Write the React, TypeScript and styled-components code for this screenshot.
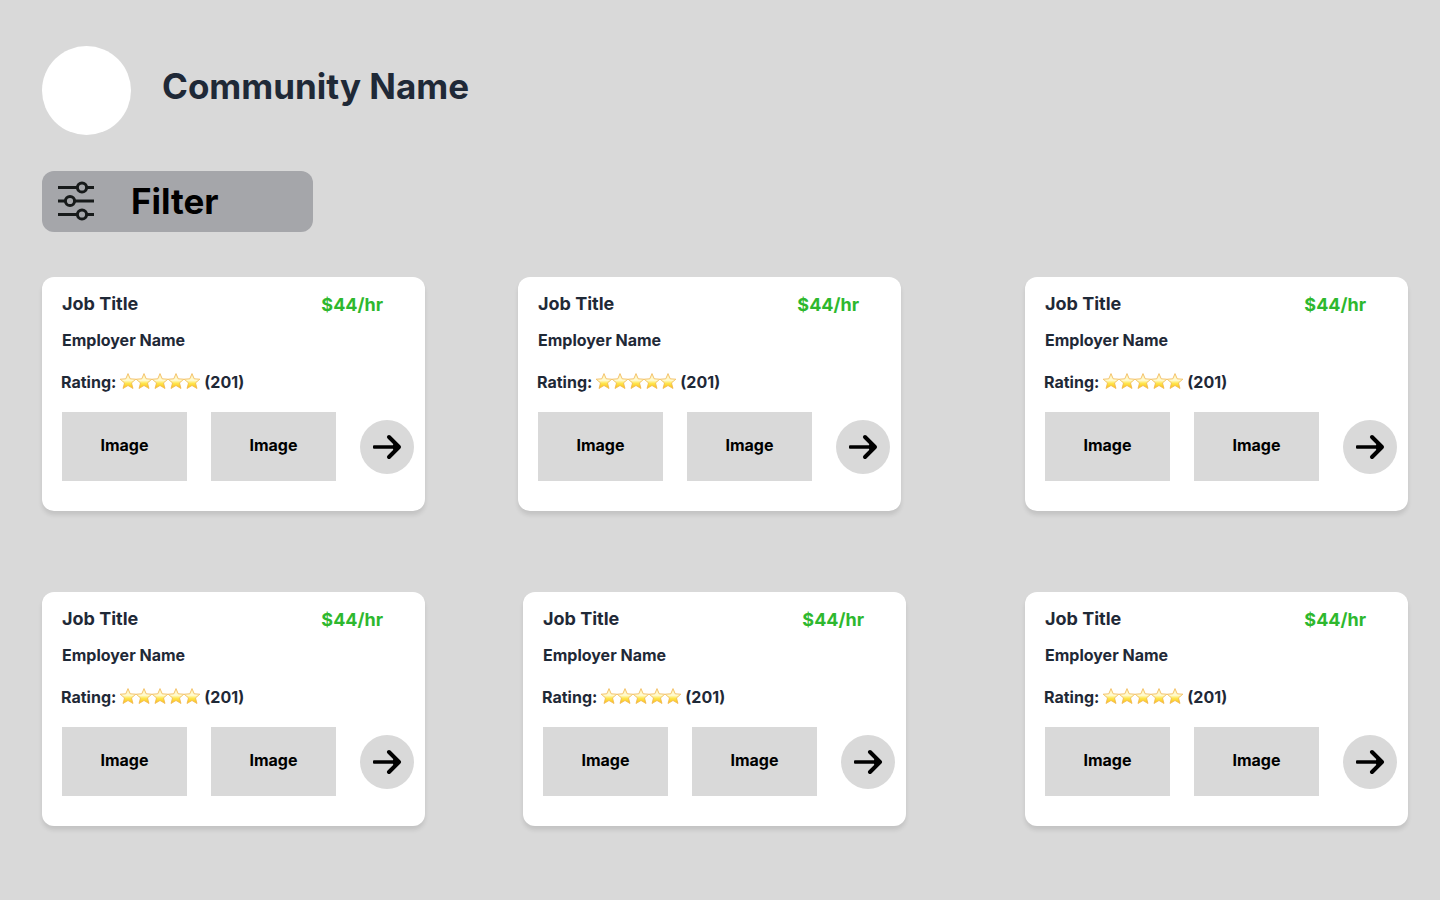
import React from "react";
import styled, { createGlobalStyle } from "styled-components";

const GlobalStyle = createGlobalStyle`
  * { box-sizing: border-box; }
  body {
    margin: 0;
    background: #d9d9d9;
    color: #1f2937;
    font-family: Inter, "Liberation Sans", sans-serif;
  }
  h1, h2, p { margin: 0; }
  button { font-family: inherit; border: 0; cursor: pointer; }
`;

const Page = styled.main`
  padding: 46px 32px 74px 42px;
`;

const Header = styled.header`
  display: flex;
  align-items: flex-start;
  gap: 31px;
`;

const Avatar = styled.div`
  width: 89px;
  height: 89px;
  border-radius: 50%;
  background: #fff;
`;

const CommunityName = styled.h1`
  font-size: 35px;
  line-height: 80px;
  font-weight: 700;
`;

const FilterButton = styled.button`
  display: flex;
  align-items: center;
  gap: 36px;
  width: 271px;
  height: 61px;
  margin-top: 36px;
  padding: 0 15px 2px;
  border-radius: 12px;
  background: #a5a6aa;
  color: #000;
  font-size: 35px;
  line-height: 60px;
  font-weight: 700;
`;

const JobList = styled.section`
  display: flex;
  flex-direction: column;
  gap: 81px;
  margin-top: 45px;
`;

const JobRow = styled.div<{ $columns: string }>`
  display: grid;
  grid-template-columns: ${(p) => p.$columns};
  justify-items: start;
`;

const Card = styled.article`
  width: 383px;
  padding: 14px 11px 30px 20px;
  border-radius: 12px;
  background: #fff;
  box-shadow: 0 4px 4px rgba(0, 0, 0, 0.1);
`;

const CardTop = styled.div`
  display: flex;
  justify-content: space-between;
  padding-right: 31px;
`;

const JobTitle = styled.h2`
  font-size: 18px;
  line-height: 26px;
  font-weight: 700;
`;

const Price = styled.p`
  color: #2eb82e;
  font-size: 18px;
  line-height: 28px;
  font-weight: 700;
`;

const Employer = styled.p`
  margin-top: 9px;
  font-size: 16px;
  line-height: 24px;
  font-weight: 700;
`;

const Rating = styled.p`
  display: flex;
  align-items: center;
  gap: 4px;
  margin: 18px 0 0 -1px;
  font-size: 16px;
  line-height: 24px;
  font-weight: 700;
`;

const Stars = styled.span`
  display: flex;
`;

const Gallery = styled.div`
  display: flex;
  align-items: center;
  gap: 24px;
  margin-top: 18px;
`;

const Thumb = styled.div`
  width: 125px;
  height: 69px;
  background: #d9d9d9;
  color: #000;
  font-size: 16px;
  line-height: 66px;
  font-weight: 700;
  text-align: center;
`;

const NextButton = styled.button`
  display: grid;
  place-items: center;
  width: 54px;
  height: 54px;
  padding: 0;
  border-radius: 50%;
  background: #d9d9d9;
  color: #000;
`;

function FilterIcon() {
  return (
    <svg width="38" height="42" viewBox="0 0 38 42" fill="none" stroke="#171a1a" strokeWidth="3" aria-hidden="true">
      <path d="M1 7.5H20M30 7.5H37M1 21H8M18 21H37M1 34.5H20M30 34.5H37" />
      <circle cx="25" cy="7.5" r="4.6" />
      <circle cx="13" cy="21" r="4.6" />
      <circle cx="25" cy="34.5" r="4.6" />
    </svg>
  );
}

function ArrowIcon() {
  return (
    <svg width="32" height="28" viewBox="0 0 32 28" fill="none" stroke="currentColor" strokeWidth="4" aria-hidden="true">
      <path d="M3 12.2Q2 12.2 2 13.2V14.8Q2 15.8 3 15.8H28V12.2Z" fill="currentColor" stroke="none" />
      <path d="M18 4L28 14L18 24" strokeLinecap="round" strokeLinejoin="round" />
      <path d="M22 11L29 14L22 17Z" fill="currentColor" stroke="none" />
    </svg>
  );
}

function StarIcon() {
  const id = React.useId();
  return (
    <svg width="16" height="18" viewBox="0 0 16 18" overflow="visible" aria-hidden="true">
      <defs>
        <linearGradient id={id} x1="0" y1="0" x2="0" y2="1">
          <stop offset="0" stopColor="#fff0b4" />
          <stop offset="0.45" stopColor="#fffbd2" />
          <stop offset="0.65" stopColor="#ffe64d" />
          <stop offset="1" stopColor="#fbbd14" />
        </linearGradient>
      </defs>
      <path
        d="M8 0.6L10.2 5.8L15.8 6.2L11.5 9.9L13 15.5L8 12.5L3 15.5L4.5 9.9L0.2 6.2L5.8 5.8Z"
        fill={`url(#${id})`}
        stroke="#f0b650"
        strokeWidth="0.8"
        strokeLinejoin="round"
      />
    </svg>
  );
}

function JobCard() {
  return (
    <Card>
      <CardTop>
        <JobTitle>Job Title</JobTitle>
        <Price>$44/hr</Price>
      </CardTop>
      <Employer>Employer Name</Employer>
      <Rating>
        <span>Rating:</span>
        <Stars role="img" aria-label="5 stars">
          {[1, 2, 3, 4, 5].map((n) => (
            <StarIcon key={n} />
          ))}
        </Stars>
        <span>(201)</span>
      </Rating>
      <Gallery>
        <Thumb>Image</Thumb>
        <Thumb>Image</Thumb>
        <NextButton type="button" aria-label="View job">
          <ArrowIcon />
        </NextButton>
      </Gallery>
    </Card>
  );
}

const rows = ["476fr 507fr 383px", "481fr 502fr 383px"];

export default function App() {
  return (
    <>
      <GlobalStyle />
      <Page>
        <Header>
          <Avatar />
          <CommunityName>Community Name</CommunityName>
        </Header>
        <FilterButton type="button">
          <FilterIcon />
          Filter
        </FilterButton>
        <JobList>
          {rows.map((columns) => (
            <JobRow key={columns} $columns={columns}>
              <JobCard />
              <JobCard />
              <JobCard />
            </JobRow>
          ))}
        </JobList>
      </Page>
    </>
  );
}
